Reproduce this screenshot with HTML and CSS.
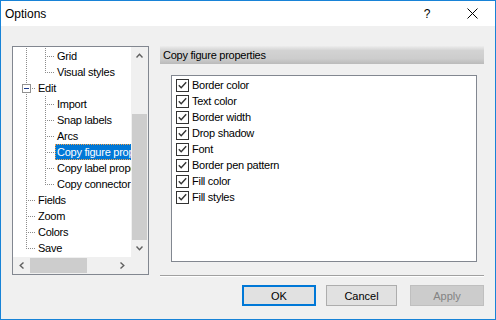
FILE: index.html
```html
<!DOCTYPE html>
<html lang="en">
<head>
    <meta charset="UTF-8">
    <title>Options</title>
    <link rel="stylesheet" href="styles.css">
</head>
<body>
    <div class="window">
        <div class="titlebar">
            <span class="title">Options</span>
            <span class="cap-btn help">?</span>
            <span class="cap-btn">
                <svg width="11" height="11" viewBox="0 0 11 11"><path d="M0.5 0.5 L10.5 10.5 M10.5 0.5 L0.5 10.5" stroke="#000" stroke-width="1" fill="none"/></svg>
            </span>
        </div>
        <div class="body">
            <div class="main">
                <div class="tree">
                    <div class="tree-body">
                        <div class="row"><span class="g"></span><span class="j"></span><span class="label">Grid</span></div>
                        <div class="row"><span class="g"></span><span class="j last"></span><span class="label">Visual styles</span></div>
                        <div class="row">
                            <span class="j open">
                                <svg class="box" width="9" height="9" viewBox="0 0 9 9"><rect x="0.5" y="0.5" width="8" height="8" fill="#fff" stroke="#919191"/><path d="M2 4.5 H7" stroke="#1c3a8c" stroke-width="1"/></svg>
                            </span>
                            <span class="label">Edit</span>
                        </div>
                        <div class="row"><span class="g"></span><span class="j"></span><span class="label">Import</span></div>
                        <div class="row"><span class="g"></span><span class="j"></span><span class="label">Snap labels</span></div>
                        <div class="row"><span class="g"></span><span class="j"></span><span class="label">Arcs</span></div>
                        <div class="row"><span class="g"></span><span class="j"></span><span class="label selected">Copy figure properties</span></div>
                        <div class="row"><span class="g"></span><span class="j"></span><span class="label">Copy label properties</span></div>
                        <div class="row"><span class="g"></span><span class="j last"></span><span class="label">Copy connector properties</span></div>
                        <div class="row"><span class="j"></span><span class="label">Fields</span></div>
                        <div class="row"><span class="j"></span><span class="label">Zoom</span></div>
                        <div class="row"><span class="j"></span><span class="label">Colors</span></div>
                        <div class="row"><span class="j last"></span><span class="label">Save</span></div>
                    </div>
                    <div class="vscroll">
                        <span class="sb-btn">
                            <svg width="7" height="5" viewBox="0 0 7 5"><polyline points="0.5,4.5 3.5,1.2 6.5,4.5" fill="none" stroke="#606060" stroke-width="1.4"/></svg>
                        </span>
                        <span class="track v-track"><span class="thumb v-thumb"></span></span>
                        <span class="sb-btn">
                            <svg width="7" height="5" viewBox="0 0 7 5"><polyline points="0.5,0.5 3.5,3.8 6.5,0.5" fill="none" stroke="#606060" stroke-width="1.4"/></svg>
                        </span>
                    </div>
                    <div class="hscroll">
                        <span class="sb-btn">
                            <svg width="5" height="7" viewBox="0 0 5 7"><polyline points="4.5,0.5 1.2,3.5 4.5,6.5" fill="none" stroke="#606060" stroke-width="1.4"/></svg>
                        </span>
                        <span class="track h-track"><span class="thumb h-thumb"></span></span>
                        <span class="sb-btn">
                            <svg width="5" height="7" viewBox="0 0 5 7"><polyline points="0.5,0.5 3.8,3.5 0.5,6.5" fill="none" stroke="#606060" stroke-width="1.4"/></svg>
                        </span>
                    </div>
                    <div class="corner"></div>
                </div>
                <div class="panel">
                    <div class="panel-head">Copy figure properties</div>
                    <div class="checklist">
                        <div class="item"><span class="cb"><svg width="11" height="11" viewBox="0 0 11 11"><polyline points="1.8,5.2 4.2,7.8 9.2,2.2" fill="none" stroke="#333" stroke-width="1.4"/></svg></span>Border color</div>
                        <div class="item"><span class="cb"><svg width="11" height="11" viewBox="0 0 11 11"><polyline points="1.8,5.2 4.2,7.8 9.2,2.2" fill="none" stroke="#333" stroke-width="1.4"/></svg></span>Text color</div>
                        <div class="item"><span class="cb"><svg width="11" height="11" viewBox="0 0 11 11"><polyline points="1.8,5.2 4.2,7.8 9.2,2.2" fill="none" stroke="#333" stroke-width="1.4"/></svg></span>Border width</div>
                        <div class="item"><span class="cb"><svg width="11" height="11" viewBox="0 0 11 11"><polyline points="1.8,5.2 4.2,7.8 9.2,2.2" fill="none" stroke="#333" stroke-width="1.4"/></svg></span>Drop shadow</div>
                        <div class="item"><span class="cb"><svg width="11" height="11" viewBox="0 0 11 11"><polyline points="1.8,5.2 4.2,7.8 9.2,2.2" fill="none" stroke="#333" stroke-width="1.4"/></svg></span>Font</div>
                        <div class="item"><span class="cb"><svg width="11" height="11" viewBox="0 0 11 11"><polyline points="1.8,5.2 4.2,7.8 9.2,2.2" fill="none" stroke="#333" stroke-width="1.4"/></svg></span>Border pen pattern</div>
                        <div class="item"><span class="cb"><svg width="11" height="11" viewBox="0 0 11 11"><polyline points="1.8,5.2 4.2,7.8 9.2,2.2" fill="none" stroke="#333" stroke-width="1.4"/></svg></span>Fill color</div>
                        <div class="item"><span class="cb"><svg width="11" height="11" viewBox="0 0 11 11"><polyline points="1.8,5.2 4.2,7.8 9.2,2.2" fill="none" stroke="#333" stroke-width="1.4"/></svg></span>Fill styles</div>
                    </div>
                    <div class="sep"></div>
                </div>
            </div>
            <div class="footer">
                <button class="btn default">OK</button>
                <button class="btn cancel">Cancel</button>
                <button class="btn apply" disabled>Apply</button>
            </div>
        </div>
    </div>
</body>
</html>
```

FILE: styles.css
```css
body {
    margin: 0;
    padding: 0;
    background: #fff;
    font-family: "Liberation Sans", Arial, sans-serif;
    font-size: 11px;
    letter-spacing: -0.25px;
    color: #000;
}
.window {
    width: 496px;
    height: 320px;
    box-sizing: border-box;
    border: 1px solid #1883d7;
    background: #f0f0f0;
    display: flex;
    flex-direction: column;
}
.titlebar {
    height: 25px;
    background: #fff;
    display: flex;
    align-items: center;
    font-size: 12px;
    letter-spacing: 0;
}
.title {
    flex: 1;
    padding-left: 4px;
}
.cap-btn {
    width: 46px;
    height: 25px;
    display: flex;
    align-items: center;
    justify-content: center;
}
.help {
    font-size: 12px;
    padding-left: 2px;
    box-sizing: border-box;
}
.body {
    flex: 1;
    padding: 20px 11px 0 11px;
}
.main {
    display: flex;
    gap: 11px;
    align-items: flex-start;
}

/* tree view */
.tree {
    width: 137px;
    height: 229px;
    box-sizing: border-box;
    border: 1px solid #828790;
    display: grid;
    grid-template-columns: 118px 17px;
    grid-template-rows: 210px 17px;
}
.tree-body {
    background: #fff;
    overflow: hidden;
    white-space: nowrap;
    padding-top: 1px;
}
.row {
    display: flex;
    height: 16px;
    line-height: 16px;
}
.g, .j {
    flex-shrink: 0;
    height: 16px;
}
.g {
    width: 19px;
    background: repeating-linear-gradient(#8c8c8c 0 1px, transparent 1px 2px) 13px 0 / 1px 100% no-repeat;
}
.j {
    width: 23px;
    display: flex;
    align-items: center;
    background:
        repeating-linear-gradient(to right, #8c8c8c 0 1px, transparent 1px 2px) 13px 8px / 10px 1px no-repeat,
        repeating-linear-gradient(#8c8c8c 0 1px, transparent 1px 2px) 13px 0 / 1px 100% no-repeat;
}
.j.last {
    background-size: 10px 1px, 1px 9px;
}
.box {
    display: block;
    margin-left: 9px;
}
.label {
    padding: 0 2px;
}
.label.selected {
    background: #0078d7;
    color: #fff;
    outline: 1px dotted #f6a34a;
    outline-offset: -1px;
}
.vscroll, .hscroll {
    display: flex;
    background: #f0f0f0;
}
.vscroll {
    flex-direction: column;
}
.sb-btn {
    width: 17px;
    height: 17px;
    flex-shrink: 0;
    display: flex;
    align-items: center;
    justify-content: center;
}
.sb-btn svg {
    display: block;
}
.track {
    flex: 1;
    display: flex;
}
.v-track {
    flex-direction: column;
    justify-content: flex-end;
}
.thumb {
    background: #cdcdcd;
}
.v-thumb {
    height: 126px;
    margin: 0 1px;
}
.h-thumb {
    width: 57px;
    margin: 1px 0;
}
.corner {
    background: #f0f0f0;
}

/* right panel */
.panel {
    width: 324px;
}
.panel-head {
    height: 18px;
    line-height: 18px;
    padding-left: 3px;
    background: linear-gradient(#ededed, #d3d3d3 25%, #cdcdcd 70%, #bababa);
}
.checklist {
    width: 306px;
    height: 187px;
    box-sizing: border-box;
    margin: 11px 0 0 11px;
    border: 1px solid #828790;
    background: #fff;
    padding: 1px 0 0 4px;
}
.item {
    display: flex;
    align-items: center;
    height: 16px;
}
.cb {
    width: 13px;
    height: 13px;
    box-sizing: border-box;
    border: 1px solid #333;
    background: #fff;
    margin-right: 3px;
}
.cb svg {
    display: block;
}
.sep {
    margin-top: 13px;
    border-top: 1px solid #a0a0a0;
    border-bottom: 1px solid #fff;
}

/* buttons */
.footer {
    display: flex;
    justify-content: flex-end;
    margin-top: 8px;
}
.btn {
    height: 21px;
    width: 74px;
    padding: 0;
    font-family: "Liberation Sans", Arial, sans-serif;
    font-size: 11px;
    color: #000;
    background: #e1e1e1;
    border: 1px solid #adadad;
    border-radius: 0;
}
.btn.default {
    border: 2px solid #0078d7;
}
.btn.cancel {
    width: 71px;
    margin-left: 10px;
}
.btn.apply {
    margin-left: 13px;
    background: #cccccc;
    border-color: #bfbfbf;
    color: #838383;
}
```
